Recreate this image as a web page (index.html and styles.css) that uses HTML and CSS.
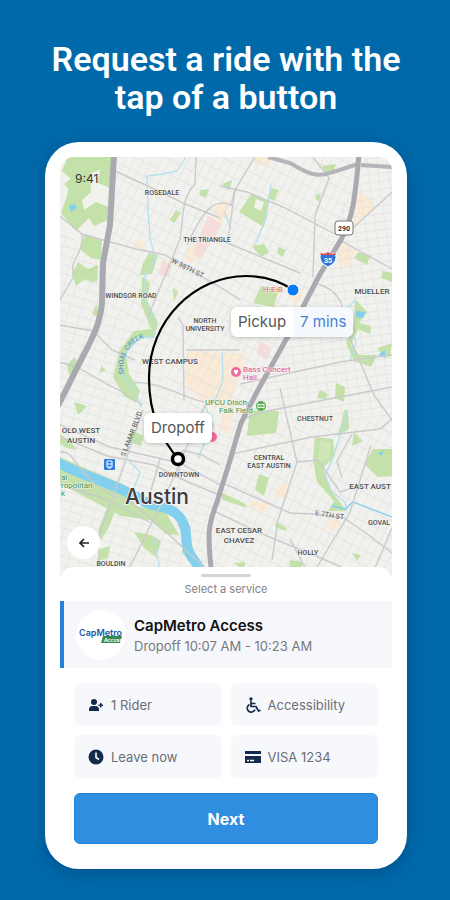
FILE: index.html
```html
<!DOCTYPE html>
<html lang="en">
<head>
  <meta charset="utf-8">
  <meta name="viewport" content="width=device-width, initial-scale=1">
  <title>CapMetro | Request a ride</title>
  <link rel="stylesheet" href="styles.css">
</head>
<body>
  <main class="page">
    <h1 class="headline">Request a ride with the tap of a button</h1>

    <div class="phone">
      <!-- map -->
      <section class="map" aria-label="Map of Austin">
        <svg class="map-art" viewBox="60 157 332 420">
          <defs>
            <pattern id="gridA" width="8" height="13" patternUnits="userSpaceOnUse" patternTransform="rotate(27)">
              <path d="M0 0H8M0 0V13" stroke="#e2e2e1" stroke-width="1.3" fill="none"/>
            </pattern>
            <pattern id="gridB" width="12" height="9" patternUnits="userSpaceOnUse" patternTransform="rotate(17)">
              <path d="M0 0H12M0 0V9" stroke="#e2e2e1" stroke-width="1.3" fill="none"/>
            </pattern>
            <pattern id="gridC" width="10" height="8" patternUnits="userSpaceOnUse" patternTransform="rotate(-8)">
              <path d="M0 0H10M0 0V8" stroke="#e2e2e1" stroke-width="1.3" fill="none"/>
            </pattern>
          </defs>
          <rect x="60" y="157" width="332" height="420" fill="#f1f1ee"/>

          <!-- campus and shopping areas -->
          <g fill="#fbead5">
            <path d="M186 348L240 358 232 410 205 405 186 385Z"/>
            <path d="M255 157L273 157 268 166 254 165Z"/>
            <path d="M359 193L374 199 372 211 353 226 357 198Z"/>
            <path d="M341 244L356 250 348 269 336 260Z"/>
            <path d="M135 241L146 242 142 250 133 249Z"/>
            <path d="M212 208L226 200 231 214 220 224Z"/>
            <path d="M187 248L199 243 196 261 185 262Z"/>
            <path d="M288 283L304 290 298 304 289 298Z"/>
            <path d="M221 352L246 355 238 380 222 381Z"/>
            <path d="M222 410L235 414 228 436 220 429Z"/>
            <path d="M275 488L289 483 287 498 276 497Z"/>
            <path d="M250 501L271 503 266 512 249 506Z"/>
            <path d="M328 519L340 520 338 531 326 529Z"/>
          </g>
          <g fill="#f8dcd9">
            <path d="M208 216L222 224 213 240 199 260 193 251Z"/>
            <path d="M162 260L172 265 169 277 159 275Z"/>
            <path d="M260 341L271 347 267 360 257 353Z"/>
            <path d="M201 421L215 425 211 438 201 436Z"/>
          </g>

          <!-- street grid -->
          <path fill="url(#gridA)" d="M110 157H365L350 210 290 330 240 420 180 410 145 340 100 300Z"/>
          <path fill="url(#gridB)" d="M60 230L105 260 100 300 145 340 180 410 240 420 215 500 212 577H60Z"/>
          <path fill="url(#gridC)" d="M365 157H392V420H240L290 330Z"/>
          <path fill="url(#gridA)" d="M240 420H392V577H212L215 500Z"/>

          <!-- parks -->
          <g fill="#c3e1a8">
            <path d="M68 157L112 157 110 188 98 183 100 169 90 173 91 192 82 200 84 210 96 202 108 207 108 220 94 226 89 218 76 231 61 213 67 196 71 179 62 171Z"/>
            <path d="M68 158L103 158 99 170 89 174 90 190 74 196 64 184 72 178 62 171Z"/>
            <path d="M85 234L102 240 101 260 91 258 80 249Z"/>
            <path d="M78 262L88 269 98 265 97 282 86 278 76 286 72 274Z"/>
            <path d="M252 193L269 201 264 227 239 212Z"/>
            <path d="M271 188L279 190 274 201 268 198Z"/>
            <path d="M176 210L181 213 174 223 170 220Z"/>
            <path d="M201 190L209 189 206 198 199 195ZM222 184L232 180 229 190Z"/>
            <path d="M322 166L336 164 334 171 326 175ZM317 193L321 195 319 202 315 198Z"/>
            <path d="M252 246L264 244 269 252 261 257ZM279 247L286 250 282 257 277 253Z"/>
            <path d="M358 252L370 256 367 265 354 258ZM383 271L392 273 392 282 381 278Z"/>
            <path d="M261 286L279 288 274 307 253 303Z"/>
            <path d="M355 299L367 312 359 323 371 326 370 334 358 329 351 345 359 355 377 355 371 367 354 361 346 343 354 323Z"/>
            <path d="M377 348L392 343 390 356 384 358Z"/>
            <path d="M149 253L158 255 152 274 140 275 143 263Z"/>
            <path d="M142 277L150 283 147 300 158 323 154 338 136 337 126 354 129 374 140 391 136 403 124 396 113 377 120 350 134 331 151 329 141 304Z"/>
            <path d="M97 304L92 313 99 319ZM75 357L79 367 69 375 67 365ZM101 366L106 370 100 373ZM74 402L87 406 78 415Z"/>
            <path d="M83 270L92 276 94 283 82 278Z"/>
            <path d="M250 410L279 411 276 433 247 436Z"/>
            <path d="M259 474L269 478 264 496 255 490ZM276 522L287 528 285 531 275 527Z"/>
            <path d="M220 492L244 503 247 508 223 500Z"/>
            <path d="M315 437L333 439 335 456 323 468 330 489 342 505 346 511 328 511 334 501 317 482 313 460Z"/>
            <path d="M344 410L348 410 349 429 337 436 341 425ZM354 432L363 441 352 446ZM373 449L392 449 392 476 378 477 364 464Z"/>
            <path d="M320 390L328 394 326 399 317 398ZM336 383L345 387 344 402 335 398Z"/>
            <path d="M60 434L70 441 77 450 67 448 60 444Z"/>
            <path d="M60 457L85 468 123 484 136 506 166 513 179 535 166 534 150 520 121 516 93 501 60 484Z"/>
            <path d="M108 505L119 501 109 527 101 540 98 531Z"/>
            <path d="M134 532L151 535 161 541 156 557 144 548ZM183 545L194 548 190 558 182 553Z"/>
            <path d="M100 549L110 546 108 558 97 561ZM290 560L303 562 301 572 289 570ZM352 553L361 555 357 561ZM234 563L245 562 244 571Z"/>
            <path d="M132 430L143 436 141 446 128 442ZM173 287L178 292 174 302Z"/>
          </g>
          <path fill="#cfe6b8" d="M320 440L331 443 329 458 318 463Z"/>
          <path fill="#f1f1ee" d="M256 199l8 3-3 9-7-3z"/>

          <!-- creeks -->
          <g fill="none" stroke="#b4e0ee" stroke-width="1.3">
            <path d="M186 157L177 171 163 174 147 176 148 210 150 238 155 258 145 276 145 300 156 326 154 337 140 337 125 353 122 373 136 393 141 407"/>
            <path d="M271 184L266 218 255 245M355 300L346 310 356 342 350 361M224 211L231 229"/>
            <path d="M222 352L223 380 216 398 205 405 213 425 198 458"/>
            <path d="M348 410L340 436 331 463 325 475 332 492 345 502 347 511"/>
            <path d="M332 506L345 509 353 502 392 517" stroke="#7ecdf0"/>
            <path d="M128 460L140 472 133 491M154 538L160 570"/>
          </g>

          <!-- lake -->
          <path d="M57 462C75 472 91 477 106 483S132 493 143 501 171 504 181 519 181 545 194 560L205 576" fill="none" stroke="#82cfee" stroke-width="10"/>
          <path d="M69 206l6-2 2 4-6 4zM356 311l10 1-3 6-7-1zM378 355l7-5v8zM378 453l6-2-3 5z" fill="#82cfee"/>

          <!-- minor roads -->
          <g fill="none" stroke="#cbcbcd" stroke-width="1.4">
            <path d="M60 216L82 234 103 240 136 249 165 255 187 268 220 287 240 300"/>
            <path d="M82 235C84 254 68 260 74 276L60 300M60 325L93 331 112 350 135 360M60 363C78 363 95 380 119 390L143 405"/>
            <path d="M115 171L150 187 183 203 220 218M196 157L195 184C181 198 184 215 180 239L148 317"/>
            <path d="M255 157L235 190 231 205C210 196 199 220 187 245M220 186L247 192 283 207 335 234M313 157L329 178 315 216 313 277"/>
            <path d="M392 192L340 240 392 269M235 190L228 240M220 240L300 273"/>
            <path d="M178 317L183 325 184 400M133 383C159 380 183 398 204 402M186 350H240M318 284C352 294 341 325 355 350L374 395 392 420"/>
            <path d="M60 437L108 456 154 465 190 483 222 496M60 425L110 447 180 463 220 485"/>
            <path d="M143 410L112 500 98 538 100 577M205 405L168 490 125 577M60 452C78 448 77 488 130 501L164 530 205 568M60 484L110 501 151 523"/>
            <path d="M240 420L262 412 392 387M232 454L312 437 380 429 392 419M240 384L340 362 392 355"/>
            <path d="M280 388L297 462 278 520 272 560M297 462L318 460 340 492 361 485M352 434L337 461 342 478M371 445L350 512 311 577"/>
            <path d="M223 483L290 513 313 514 344 518 370 536 392 553M214 511L260 533 340 566 352 577M392 528L371 577M290 539L310 577"/>
            <path d="M178 475L183 450 202 455 220 465M160 459L151 490"/>
          </g>
          <path d="M268 157L290 163C305 172 317 179 333 172L358 164M361 165L392 167" fill="none" stroke="#b4b4b9" stroke-width="4"/>

          <!-- highways -->
          <g fill="none" stroke="#aaa9af" stroke-width="6">
            <path d="M114 155L110 225 103 263 102 303C100 327 89 344 79 364L58 406"/>
            <path d="M359 155C355 196 354 214 342 238L319 276 288 336 258 390 241 423 228 467 217 502C208 525 207 533 212 577" stroke-width="5"/>
          </g>

          <!-- district names -->
          <g class="place">
            <text x="162" y="195">ROSEDALE</text>
            <text x="207" y="242">THE TRIANGLE</text>
            <text x="131" y="298">WINDSOR ROAD</text>
            <text x="205" y="323">NORTH</text>
            <text x="205" y="331">UNIVERSITY</text>
            <text x="315" y="421">CHESTNUT</text>
            <text x="269" y="460">CENTRAL</text>
            <text x="269" y="468">EAST AUSTIN</text>
            <text x="179" y="477">DOWNTOWN</text>
            <text x="308" y="555">HOLLY</text>
            <text x="111" y="566">BOULDIN</text>
            <text x="379" y="525">GOVAL</text>
          </g>
          <g class="place place-lg">
            <text x="170" y="364">WEST CAMPUS</text>
            <text x="372" y="294">MUELLER</text>
            <text x="81" y="433">OLD WEST</text>
            <text x="81" y="443">AUSTIN</text>
            <text x="370" y="489">EAST AUST</text>
            <text x="239" y="533">EAST CESAR</text>
            <text x="239" y="543">CHAVEZ</text>
          </g>
          <g class="street">
            <text transform="translate(171 262) rotate(27)">W 38TH ST</text>
            <text transform="translate(125 457) rotate(-69)">S LAMAR BLVD</text>
            <text transform="translate(315 515) rotate(9)">E 7TH ST</text>
          </g>
          <path id="creekLine" d="M124 374C120 354 134 337 150 338" fill="none"/>
          <text class="creek"><textPath href="#creekLine">SHOAL CREEK</textPath></text>
          <text class="city" x="157" y="504">Austin</text>

          <!-- points of interest -->
          <text class="poi poi-red" x="263" y="292">H-E-B</text>
          <circle cx="236" cy="372" r="5" fill="#ee6c9f"/>
          <path d="M234 370h4v2l-2 3-2-3z" fill="#fff"/>
          <text class="poi poi-pink" x="243" y="372">Bass Concert</text>
          <text class="poi poi-pink" x="243" y="380">Hall</text>
          <text class="poi poi-green" x="205" y="405">UFCU Disch-</text>
          <text class="poi poi-green" x="219" y="413">Falk Field</text>
          <circle cx="261" cy="406" r="5" fill="#54ad50"/>
          <path d="M258 404q3 2 6 0v4q-3-2-6 0z" fill="none" stroke="#fff"/>
          <text class="poi poi-green" x="61" y="480">al</text>
          <text class="poi poi-green" x="61" y="488">ropolitan</text>
          <text class="poi poi-green" x="61" y="496">k</text>
          <circle cx="212" cy="437" r="5" fill="#ee6c9f"/>
          <rect x="104" y="459" width="11" height="11" rx="1" fill="#2f7de0"/>
          <path d="M107 461h5v6h-5zM107 464h5M108 468h3" fill="none" stroke="#fff"/>

          <!-- road shields -->
          <rect x="335" y="221" width="18" height="14" rx="3" fill="#fff" stroke="#77777c"/>
          <text class="shield" x="344" y="231">290</text>
          <path d="M321 253q3 2 7-1 4 3 7 1 4 9-7 14-11-5-7-14z" fill="#3375d3" stroke="#fff"/>
          <path d="M321 253q3 2 7-1 4 3 7 1l1 2h-16z" fill="#dc4f55"/>
          <text class="shield shield-blue" x="328" y="263">35</text>

          <!-- route -->
          <path d="M178 459C163 440 149 418 149 378 149 320 195 276 246 276 265 276 280 281 293 290" fill="none" stroke="#000" stroke-width="2.2"/>
          <circle cx="178" cy="459" r="5.5" fill="#fff" stroke="#000" stroke-width="3.5"/>
          <circle cx="293" cy="290" r="6" fill="#087bf5" stroke="#fff"/>
        </svg>
        <span class="clock">9:41</span>
        <div class="pin pin-pickup"><span class="pin-name">Pickup</span><span class="pin-time">7 mins</span></div>
        <div class="pin pin-dropoff"><span class="pin-name">Dropoff</span></div>
        <button class="back" type="button" aria-label="Back">
          <svg width="12" height="12" viewBox="0 0 12 12"><path d="M11 6H2M6 2L2 6l4 4" fill="none" stroke="#222" stroke-width="1.7"/></svg>
        </button>
      </section>

      <!-- booking sheet -->
      <section class="sheet">
        <div class="handle"></div>
        <h2 class="sheet-title">Select a service</h2>

        <button class="service" type="button">
          <svg class="logo" viewBox="0 0 50 50">
            <circle cx="25" cy="25" r="25" fill="#fff"/>
            <path d="M27 26h19l-2 7H25z" fill="#378b51"/>
            <text class="logo-name" x="3" y="26">CapMetro</text>
            <text class="logo-tag" x="28" y="32">Access</text>
          </svg>
          <span class="service-text">
            <span class="service-name">CapMetro Access</span>
            <span class="service-time">Dropoff 10:07 AM - 10:23 AM</span>
          </span>
        </button>

        <div class="options">
          <button class="option" type="button">
            <svg class="icon" viewBox="0 0 16 16"><circle cx="6" cy="5" r="3"/><path d="M1 14v-1.500q0-3.500 3.500-3.500h3q3.500 0 3.500 3.500V14zM12 6h1.500v1.500H15V9h-1.500v1.500H12V9h-1.500V7.500H12z"/></svg>
            1 Rider
          </button>
          <button class="option" type="button">
            <svg class="icon" viewBox="0 0 16 16"><circle cx="6" cy="2" r="1.700"/><path d="M6 4v5.500h5l2.500 4.500 2-.8M6 6.500h4.500M4.500 7.500a4 4 0 1 0 5.500 5" fill="none" stroke="#152b4c" stroke-width="1.700"/></svg>
            Accessibility
          </button>
          <button class="option" type="button">
            <svg class="icon" viewBox="0 0 16 16"><circle cx="8" cy="8" r="7.500"/><path d="M8 3.500V8.500l3 2" fill="none" stroke="#fff" stroke-width="1.600"/></svg>
            Leave now
          </button>
          <button class="option" type="button">
            <svg class="icon" viewBox="0 0 16 16"><path d="M0 2h16v3H0zM0 7h16v7H0z"/><path d="M2 11.500h2M5 11.500h4" stroke="#fff" stroke-width="1.300"/></svg>
            VISA 1234
          </button>
        </div>

        <button class="next" type="button">Next</button>
      </section>
    </div>
  </main>
</body>
</html>
```
FILE: styles.css
```css
* {
  box-sizing: border-box;
}
body {
  margin: 0;
  min-height: 100vh;
  background: #0069aa;
  font-family: Inter, "Liberation Sans", sans-serif;
}
button {
  font-family: inherit;
  border: 0;
  padding: 0;
  cursor: pointer;
}
.page {
  padding: 40px 43px 30px 45px;
}
.headline {
  margin: 0 0 26px;
  color: #fff;
  font: 600 34px/38px Roboto, sans-serif;
  text-align: center;
}
.phone {
  padding: 15px 15px 25px;
  background: #fff;
  border-radius: 34px;
  box-shadow: 0 4px 16px rgba(0, 30, 70, 0.3);
}

/* map */
.map {
  position: relative;
  border-radius: 14px 14px 0 0;
  overflow: hidden;
}
.map-art {
  display: block;
  width: 100%;
}
.map-art text {
  font-family: Roboto, sans-serif;
}
.place text {
  font-size: 7px;
  font-weight: 500;
  fill: #4c4c4e;
  text-anchor: middle;
  stroke: #f4f4f1;
  stroke-width: 1px;
  paint-order: stroke;
}
.place-lg text {
  font-size: 8px;
}
.street text {
  font-size: 7px;
  fill: #59595c;
}
.map-art .creek {
  font-size: 7px;
  fill: #4b91bd;
}
.map-art .city {
  font-family: Inter, sans-serif;
  font-size: 21px;
  font-weight: 500;
  fill: #3d3d40;
  text-anchor: middle;
  stroke: #f4f4f1;
  stroke-width: 2px;
  paint-order: stroke;
}
.poi {
  font-size: 8px;
  stroke: #f4f4f1;
  stroke-width: 1px;
  paint-order: stroke;
}
.poi-red {
  fill: #df6a4c;
}
.poi-pink {
  fill: #e0558b;
}
.poi-green {
  fill: #3f9446;
}
.shield {
  font-size: 7px;
  font-weight: 700;
  fill: #333;
  text-anchor: middle;
}
.shield-blue {
  fill: #fff;
}
.clock {
  position: absolute;
  top: 14px;
  left: 15px;
  color: #333;
  font-size: 12px;
  line-height: 16px;
}
.pin {
  position: absolute;
  display: flex;
  height: 30px;
  background: #fff;
  border-radius: 6px;
  box-shadow: 0 1px 4px rgba(0, 0, 0, 0.2);
  color: #555;
  font-size: 15px;
  line-height: 30px;
  overflow: hidden;
}
.pin-name {
  padding: 0 7px;
}
.pin-time {
  padding: 0 7px;
  background: #f5f8fc;
  color: #4682d2;
}
.pin-pickup {
  top: 150px;
  left: 171px;
}
.pin-dropoff {
  top: 256px;
  left: 84px;
}
.back {
  position: absolute;
  bottom: 18px;
  left: 7px;
  width: 33px;
  height: 33px;
  display: grid;
  place-items: center;
  background: #fff;
  border-radius: 50%;
}

/* booking sheet */
.sheet {
  position: relative;
  margin-top: -10px;
  padding-top: 7px;
  background: #fff;
  border-radius: 14px 14px 0 0;
}
.handle {
  width: 50px;
  height: 3px;
  margin: 0 auto 4px;
  background: #d4d4d6;
  border-radius: 2px;
}
.sheet-title {
  margin: 0 0 4px;
  color: #808084;
  font-size: 11px;
  font-weight: 400;
  line-height: 16px;
  text-align: center;
}
.service {
  width: 100%;
  display: flex;
  align-items: center;
  gap: 8px;
  padding: 9px 12px 8px;
  background: #f5f7fb;
  border-left: 4px solid #2481dd;
  text-align: left;
}
.logo {
  width: 50px;
  height: 50px;
}
.logo-name {
  fill: #18599f;
  font-size: 9px;
  font-weight: 600;
}
.logo-tag {
  fill: #fff;
  font-size: 5px;
  font-weight: 700;
  font-style: italic;
}
.service-text {
  display: grid;
  padding-top: 2px;
}
.service-name {
  color: #111;
  font-size: 15px;
  font-weight: 600;
  line-height: 20px;
}
.service-time {
  color: #77797f;
  font-size: 13px;
  line-height: 20px;
}
.options {
  display: grid;
  grid-template-columns: 1fr 1fr;
  gap: 9px;
  padding: 15px 14px;
}
.option {
  display: flex;
  align-items: center;
  gap: 7px;
  height: 43px;
  padding: 0 14px;
  background: #f7f8fc;
  border-radius: 6px;
  color: #6b6e75;
  font-size: 13px;
}
.icon {
  width: 16px;
  height: 16px;
  fill: #152b4c;
}
.next {
  display: block;
  width: calc(100% - 28px);
  height: 51px;
  margin: 0 14px;
  background: #2f8ee0;
  border: 1px solid #1b86dc;
  border-radius: 6px;
  color: #fff;
  font-size: 16px;
  font-weight: 700;
}
```
